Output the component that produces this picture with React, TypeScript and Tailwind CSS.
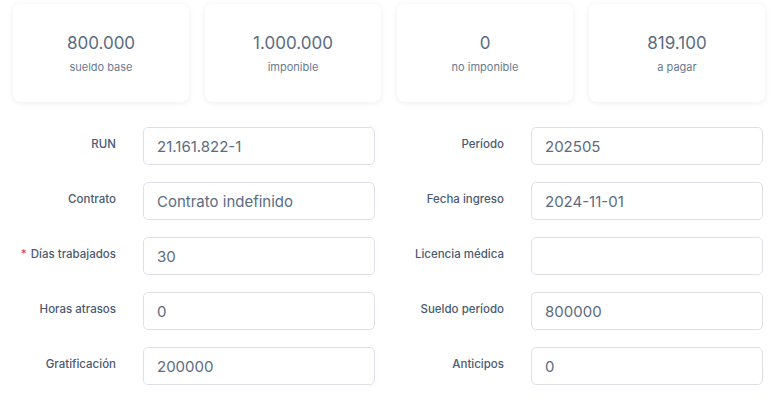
const stats = [
  { value: "800.000", label: "sueldo base" },
  { value: "1.000.000", label: "imponible" },
  { value: "0", label: "no imponible" },
  { value: "819.100", label: "a pagar" },
];

type Field = { label: string; value: string; required?: boolean };

const left: Field[] = [
  { label: "RUN", value: "21.161.822-1" },
  { label: "Contrato", value: "Contrato indefinido" },
  { label: "Días trabajados", value: "30", required: true },
  { label: "Horas atrasos", value: "0" },
  { label: "Gratificación", value: "200000" },
];

const right: Field[] = [
  { label: "Período", value: "202505" },
  { label: "Fecha ingreso", value: "2024-11-01" },
  { label: "Licencia médica", value: "" },
  { label: "Sueldo período", value: "800000" },
  { label: "Anticipos", value: "0" },
];

const FieldRow = ({ field }: { field: Field }) => (
  <div className="flex items-start gap-[27px]">
    <label className="w-[103px] shrink-0 pt-[9px] text-right text-[11.5px] leading-[16px] font-medium text-[#4a5a70]">
      {field.required && <span className="mr-1 text-[#ef4444]">*</span>}
      {field.label}
    </label>
    <input
      readOnly
      value={field.value}
      className="h-[38px] w-[232px] rounded-[5px] border border-[#dde1e7] bg-white px-[13px] text-[15px] text-[#5b6b82] outline-none"
    />
  </div>
);

export default function App() {
  return (
    <div
      className="min-h-[400px] bg-white pl-[13px] pr-[10px] pt-[4px]"
      style={{ fontFamily: "Inter, 'Noto Sans', sans-serif" }}
    >
      {/* Summary cards */}
      <div className="grid grid-cols-4 gap-4">
        {stats.map((s) => (
          <div
            key={s.label}
            className="h-[98px] rounded-lg bg-white pt-[27px] text-center shadow-[0_1px_6px_rgba(15,23,42,0.08)]"
          >
            <div className="text-[17px] leading-[24px] text-[#5b6b82]">{s.value}</div>
            <div className="mt-[4px] text-[11px] leading-[16px] text-[#6b7a90]">{s.label}</div>
          </div>
        ))}
      </div>

      {/* Form */}
      <div className="mt-[25px] flex gap-[26px]">
        <div className="flex flex-col gap-[17px]">
          {left.map((f) => (
            <FieldRow key={f.label} field={f} />
          ))}
        </div>
        <div className="flex flex-col gap-[17px]">
          {right.map((f) => (
            <FieldRow key={f.label} field={f} />
          ))}
        </div>
      </div>
    </div>
  );
}
